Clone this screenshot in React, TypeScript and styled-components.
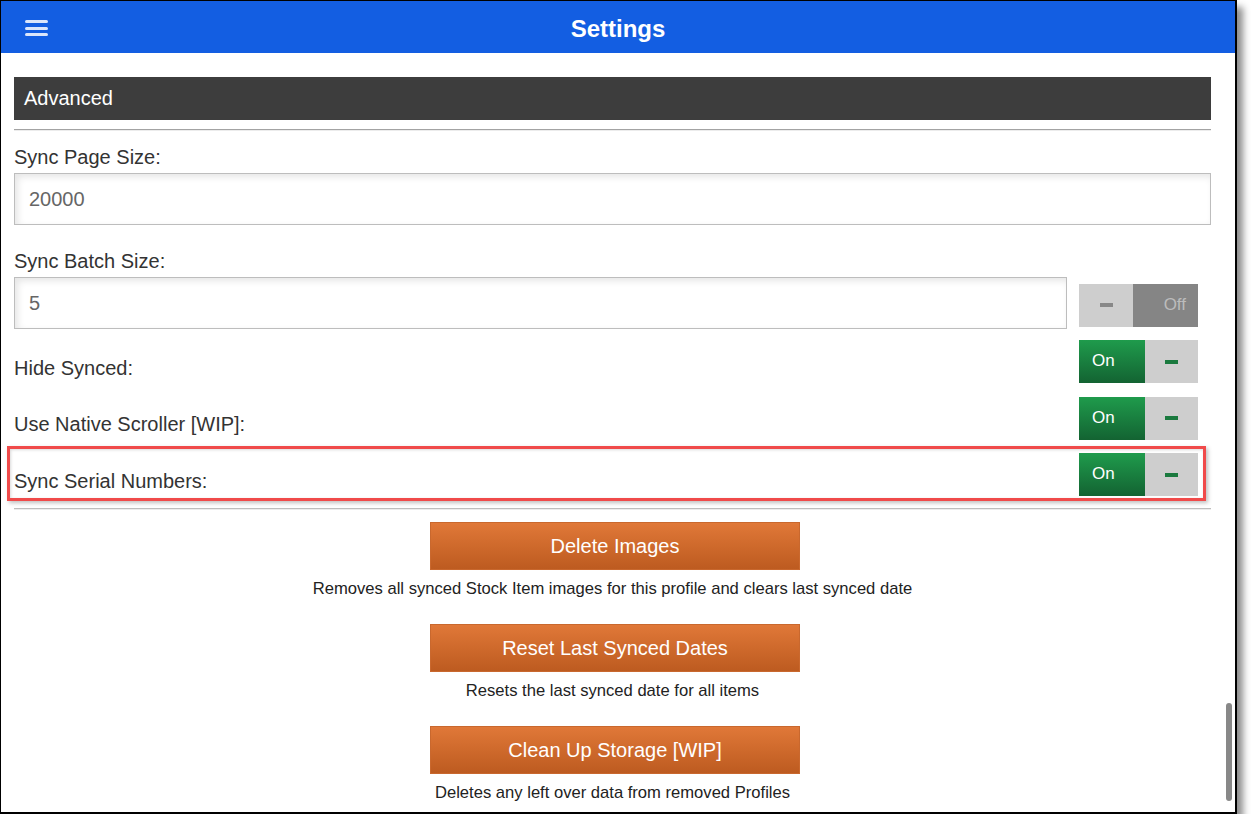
import React from "react";
import styled, { createGlobalStyle } from "styled-components";

const Global = createGlobalStyle`
  html, body { margin: 0; padding: 0; background: #ffffff; }
  body { font-family: "Liberation Sans", Arial, sans-serif; }
  * { box-sizing: border-box; }
`;

const Frame = styled.div`
  position: relative;
  width: 1237px;
  height: 814px;
  border: 1px solid #000;
  border-right-width: 2px;
  border-bottom-width: 2px;
  background: #fff;
  box-shadow: 6px 7px 7px rgba(0, 0, 0, 0.45);
  overflow: hidden;
`;

const Header = styled.header`
  position: relative;
  height: 52px;
  background: #135ee2;
  display: flex;
  align-items: center;
  justify-content: center;
`;

const Title = styled.h1`
  margin: 0;
  padding-top: 3px;
  color: #fff;
  font-size: 24px;
  font-weight: 700;
`;

const MenuButton = styled.div`
  position: absolute;
  left: 24px;
  top: 19px;
  width: 23px;
  display: flex;
  flex-direction: column;
  gap: 3.5px;
`;

const MenuBar = styled.span`
  display: block;
  height: 3px;
  border-radius: 2px;
  background: #dbe6fb;
`;

const Content = styled.main`
  padding: 24px 24px 0 13px;
`;

const SectionBar = styled.div`
  height: 43px;
  background: #3d3d3d;
  color: #fff;
  font-size: 20px;
  display: flex;
  align-items: center;
  padding-left: 10px;
`;

const Rule = styled.div<{ $tone?: "dark" | "light" }>`
  height: 2px;
  border-top: 1px solid ${(p) => (p.$tone === "light" ? "#bdbdbd" : "#a3a3a3")};
  border-bottom: 1px solid #ececec;
`;

const Label = styled.div`
  font-size: 20px;
  line-height: 24px;
  color: #333;
`;

const FieldLabel = styled(Label)<{ $top: number }>`
  margin-top: ${(p) => p.$top}px;
  margin-bottom: 4px;
`;

const InputRow = styled.div`
  display: flex;
  align-items: center;
  gap: 12px;
`;

const Input = styled.div`
  flex: 1;
  height: 52px;
  border: 1px solid #bdbdbd;
  box-shadow: inset 3px 3px 7px rgba(0, 0, 0, 0.1);
  display: flex;
  align-items: center;
  padding-left: 14px;
  font-size: 20px;
  color: #666;
`;

const ToggleRow = styled.div<{ $top: number }>`
  position: relative;
  display: flex;
  justify-content: space-between;
  align-items: center;
  margin-top: ${(p) => p.$top}px;
`;

const RowLabel = styled(Label)`
  padding-top: 12px;
`;

const Toggle = styled.div<{ $offset?: number }>`
  display: flex;
  width: 119px;
  height: 43px;
  margin-right: 13px;
  margin-top: ${(p) => p.$offset ?? 0}px;
  font-size: 17px;
`;

const OnPart = styled.div`
  width: 66px;
  background: linear-gradient(#1f9b4c, #136332);
  color: #fff;
  display: flex;
  align-items: center;
  padding-left: 13px;
  padding-bottom: 1px;
`;

const OffPart = styled.div`
  flex: 1;
  background: #858585;
  color: #bcbcbc;
  display: flex;
  align-items: center;
  justify-content: flex-end;
  padding-right: 12px;
`;

const Knob = styled.div<{ $w?: number }>`
  ${(p) => (p.$w ? `width: ${p.$w}px;` : "flex: 1;")}
  background: #cecece;
  display: flex;
  align-items: center;
  justify-content: center;
`;

const Dash = styled.span<{ $color: string }>`
  display: block;
  width: 13px;
  height: 4px;
  background: ${(p) => p.$color};
`;

const Highlight = styled.div`
  position: absolute;
  left: -7px;
  right: 5px;
  top: -7px;
  bottom: -5px;
  border: 3px solid #f04a4a;
  box-shadow: 2px 2px 4px rgba(0, 0, 0, 0.25), inset 1px 1px 3px rgba(0, 0, 0, 0.15);
  pointer-events: none;
`;

const Actions = styled.div`
  display: flex;
  flex-direction: column;
  align-items: center;
  padding-top: 12px;
`;

const Action = styled.div`
  display: flex;
  flex-direction: column;
  align-items: center;
  margin-bottom: 25px;
`;

const OrangeButton = styled.button`
  width: 370px;
  height: 48px;
  margin-left: 5px;
  border: 1px solid #c9682e;
  background: linear-gradient(#e07838, #bd5b20);
  color: #fff;
  font-family: "Liberation Sans", Arial, sans-serif;
  font-size: 20px;
  padding: 0;
  cursor: pointer;
`;

const Description = styled.div`
  margin-top: 9px;
  font-size: 16.6px;
  line-height: 20px;
  color: #222;
`;

const ScrollThumb = styled.div`
  position: absolute;
  right: 3px;
  top: 702px;
  width: 6px;
  height: 98px;
  border-radius: 3px;
  background: #888;
`;

const OnToggle = () => (
  <Toggle>
    <OnPart>On</OnPart>
    <Knob>
      <Dash $color="#1b7a3f" />
    </Knob>
  </Toggle>
);

const actions = [
  { title: "Delete Images", desc: "Removes all synced Stock Item images for this profile and clears last synced date" },
  { title: "Reset Last Synced Dates", desc: "Resets the last synced date for all items" },
  { title: "Clean Up Storage [WIP]", desc: "Deletes any left over data from removed Profiles" },
];

export default function App() {
  return (
    <>
      <Global />
      <Frame>
        <Header>
          <MenuButton>
            <MenuBar />
            <MenuBar />
            <MenuBar />
          </MenuButton>
          <Title>Settings</Title>
        </Header>
        <Content>
          <SectionBar>Advanced</SectionBar>
          <div style={{ height: 9 }} />
          <Rule />
          <FieldLabel $top={14}>Sync Page Size:</FieldLabel>
          <InputRow>
            <Input>20000</Input>
          </InputRow>
          <FieldLabel $top={24}>Sync Batch Size:</FieldLabel>
          <InputRow>
            <Input>5</Input>
            <Toggle $offset={4}>
              <Knob $w={54}>
                <Dash $color="#888" />
              </Knob>
              <OffPart>Off</OffPart>
            </Toggle>
          </InputRow>
          <ToggleRow $top={11}>
            <RowLabel>Hide Synced:</RowLabel>
            <OnToggle />
          </ToggleRow>
          <ToggleRow $top={13.5}>
            <RowLabel>Use Native Scroller [WIP]:</RowLabel>
            <OnToggle />
          </ToggleRow>
          <ToggleRow $top={13.5}>
            <RowLabel>Sync Serial Numbers:</RowLabel>
            <OnToggle />
            <Highlight />
          </ToggleRow>
          <div style={{ height: 12 }} />
          <Rule $tone="light" />
          <Actions>
            {actions.map((a) => (
              <Action key={a.title}>
                <OrangeButton>{a.title}</OrangeButton>
                <Description>{a.desc}</Description>
              </Action>
            ))}
          </Actions>
        </Content>
        <ScrollThumb />
      </Frame>
    </>
  );
}
